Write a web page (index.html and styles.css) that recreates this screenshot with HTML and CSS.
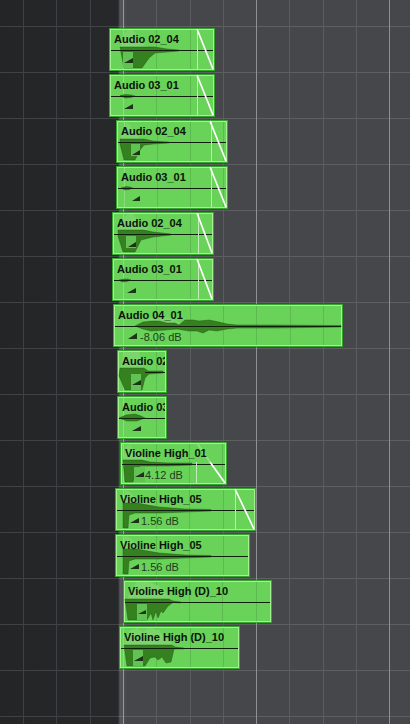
FILE: index.html
```html
<!DOCTYPE html>
<html lang="en">
<head>
<meta charset="utf-8">
<title>Arrangement</title>
<link rel="stylesheet" href="styles.css">
</head>
<body>
<main class="arrange">

<div class="lane"><div class="clip c1">
<svg class="wave" width="106" height="43"><path class="gl" d="M47.5 2V41M81.5 2V41"/><path class="gl-b" d="M14.5 2V41"/><path class="pale" d="M11 19L14 8 18 2 24 2 29 9 33 14 38 19Z"/><path class="dark" d="M11 19H46L58 21 70 22 70 23 58 24 46 25 40 30 33 40 15 40Z"/><path class="ln" d="M2 22.500H104"/><path class="sq" d="M14 24H24V40H14Z"/><path class="tri" d="M15 35L24 30V35Z"/><path class="vf" d="M88.500 2V41"/><path class="fd" d="M88 1L104 41"/></svg>
<div class="title">Audio 02_04</div></div></div>

<div class="lane"><div class="clip c1">
<svg class="wave" width="106" height="43"><path class="gl" d="M47.5 2V41M81.5 2V41"/><path class="gl-b" d="M14.5 2V41"/><path class="dark" d="M11 21.500L16 20.500 22 21 26 22 22 23.500 16 24Z"/><path class="ln" d="M2 22.500H104"/><path class="tri" d="M15 35L24 30V35Z"/><path class="vf" d="M88.500 2V41"/><path class="fd" d="M88 1L104 41"/></svg>
<div class="title">Audio 03_01</div></div></div>

<div class="lane"><div class="clip c3">
<svg class="wave" width="112" height="43"><path class="gl" d="M41.5 2V41M74.5 2V41M107.500 2V41"/><path class="gl-b" d="M8.5 2V41"/><path class="pale" d="M4 19L8 8 11 2 14 5 18 12 25 19Z"/><path class="dark" d="M4 19H28L37 21 53 22 53 23 37 24 28 25 24 30 19 40 8 40 4 24Z"/><path class="ln" d="M2 22.500H110"/><path class="sq" d="M15 24H24V36H15Z"/><path class="tri" d="M16 35L24 30V35Z"/><path class="vf" d="M95.500 2V41"/><path class="fd" d="M94 1L110 41"/></svg>
<div class="title">Audio 02_04</div></div></div>

<div class="lane"><div class="clip c3">
<svg class="wave" width="112" height="43"><path class="gl" d="M41.5 2V41M74.5 2V41M107.500 2V41"/><path class="gl-b" d="M8.5 2V41"/><path class="dark" d="M5 22L10 20.500 14 21 17 22 13 23.500 9 24Z"/><path class="ln" d="M2 22.500H110"/><path class="tri" d="M16 35L24 30V35Z"/><path class="vf" d="M95.500 2V41"/><path class="fd" d="M94 1L110 41"/></svg>
<div class="title">Audio 03_01</div></div></div>

<div class="lane"><div class="clip c5">
<svg class="wave" width="102" height="43"><path class="gl" d="M44.5 2V41M78.5 2V41"/><path class="gl-b" d="M11.5 2V41"/><path class="pale" d="M6 18L10 7 16 2 21 2 27 9 32 14 37 18Z"/><path class="dark" d="M6 18H32L41 20 59 22 59 23 41 25 29 28 23 40 11 40 6 24Z"/><path class="ln" d="M2 22.500H100"/><path class="sq" d="M14 24H24V36H14Z"/><path class="tri" d="M16 35L24 30V35Z"/><path class="vf" d="M86.500 2V41"/><path class="fd" d="M85 1L100 41"/></svg>
<div class="title">Audio 02_04</div></div></div>

<div class="lane"><div class="clip c5">
<svg class="wave" width="102" height="43"><path class="gl" d="M44.5 2V41M78.5 2V41"/><path class="gl-b" d="M11.5 2V41"/><path class="dark" d="M7 22L12 21 16 21 19 22 15 23.500 10 24Z"/><path class="ln" d="M2 22.500H100"/><path class="tri" d="M15 35L24 30V35Z"/><path class="vf" d="M86.500 2V41"/><path class="fd" d="M85 1L100 41"/></svg>
<div class="title">Audio 03_01</div></div></div>

<div class="lane"><div class="clip c7">
<svg class="wave" width="230" height="43"><path class="gl" d="M43.5 2V41M77.500 2V41M110.500 2V41M143.500 2V41M177.500 2V41M210.500 2V41"/><path class="gl-b" d="M10.5 2V41"/><path class="pale" d="M25 20L35 15 45 13 52 13 60 15 66 18 70 20Z"/><path class="dark" d="M22 22L30 18 38 17 46 17 54 19 62 19 66 21 72 16 80 16 86 17 96 16 106 18 114 20 124 21 160 21 228 21.500 228 23 160 24 124 24 114 25 104 27 96 26 90 29 84 27 76 27 70 26 64 25 52 26 38 27 30 25Z"/><path class="ln" d="M2 22.500H228"/><path class="tri" d="M15 35L24 29V35Z"/></svg>
<div class="title">Audio 04_01</div><div class="gain gain-7">-8.06 dB</div></div></div>

<div class="lane"><div class="clip c8">
<svg class="wave" width="50" height="43"><path class="gl" d="M39.500 2V41"/><path class="gl-b" d="M6.5 2V41"/><path class="pale" d="M3 18L6 8 7 2 22 2 24 8 26 18Z"/><path class="dark" d="M3 18H27L31 21 46 21 46 23 32 24 28 28 25 40 8 40 2 26Z"/><path class="ln" d="M28 22.500H48"/><path class="sq" d="M14 24H24V40H14Z"/><path class="tri" d="M15 35L24 30V35Z"/></svg>
<div class="title">Audio 02_04</div></div></div>

<div class="lane"><div class="clip c8">
<svg class="wave" width="50" height="43"><path class="gl" d="M39.500 2V41"/><path class="gl-b" d="M6.5 2V41"/><path class="dark" d="M2 22L9 19 18 18 24 20 28 22 20 25 10 25Z"/><path class="ln" d="M2 22.500H48"/><path class="tri" d="M15 35L24 30V35Z"/></svg>
<div class="title">Audio 03_01</div></div></div>

<div class="lane"><div class="clip c10">
<svg class="wave" width="107" height="43"><path class="gl" d="M36.5 2V41M69.500 2V41M102.500 2V41"/><path class="gl-b" d="M3.5 2V41"/><path class="pale" d="M3 18L6 4 10 2 14 8 20 13 28 18Z"/><path class="dark" d="M3 18H22L30 20 48 21 72 21 72 23 48 24 30 24 20 24 16 30 13 40 5 40Z"/><path class="ln" d="M2 22.500H105"/><path class="sq" d="M14 25H25V40H14Z"/><path class="tri" d="M15 35L24 30V35Z"/><path class="vf" d="M76.500 20V41"/><path class="fd-s" d="M77 1L90 20"/><path class="fd" d="M90 20L105 41"/></svg>
<div class="title">Violine High_01</div><div class="gain gain-10">4.12 dB</div></div></div>

<div class="lane"><div class="clip c11">
<svg class="wave" width="141" height="43"><path class="gl" d="M41.5 2V41M74.5 2V41M108.500 2V41"/><path class="gl-b" d="M8.5 2V41"/><path class="pale" d="M8 15L10 2 14 3 20 9 28 14 45 18Z"/><path class="dark" d="M8 15H22L44 19 70 21 96 21.500 96 23 70 24 44 25 20 25 14 27 13 40 8 40Z"/><path class="ln" d="M2 22.500H139"/><path class="tri" d="M15 35L24 30V35Z"/><path class="vf" d="M120.500 2V41"/><path class="fd" d="M120 1L139 41"/></svg>
<div class="title">Violine High_05</div><div class="gain gain-11">1.56 dB</div></div></div>

<div class="lane"><div class="clip c12">
<svg class="wave" width="135" height="43"><path class="gl" d="M41.5 2V41M74.5 2V41M108.500 2V41"/><path class="gl-b" d="M8.5 2V41"/><path class="pale" d="M8 15L10 2 14 3 20 9 28 14 45 18Z"/><path class="dark" d="M8 15H22L44 19 70 21 96 21.500 96 23 70 24 44 25 20 25 14 27 13 40 8 40Z"/><path class="ln" d="M2 22.500H133"/><path class="tri" d="M15 35L24 30V35Z"/></svg>
<div class="title">Violine High_05</div><div class="gain gain-11">1.56 dB</div></div></div>

<div class="lane"><div class="clip c13">
<svg class="wave" width="149" height="43"><path class="gl" d="M33.5 2V41M66.500 2V41M99.500 2V41M133.500 2V41"/><path class="pale" d="M4 19L10 7 14 2 26 2 36 6 42 12 50 21Z"/><path class="dark" d="M2 19H46L50 21 58 22 58 23 50 22.500 45 26 40 33 38 31 35 38 33 31 30 40 28 33 24 40 5 40Z"/><path class="ln" d="M2 22.500H147"/><path class="sq" d="M14 24H24V40H14Z"/><path class="tri" d="M15 34L23 30V34Z"/></svg>
<div class="title">Violine High (D)_10</div></div></div>

<div class="lane"><div class="clip c14">
<svg class="wave" width="121" height="43"><path class="gl" d="M37.5 2V41M71.500 2V41M104.500 2V41"/><path class="gl-b" d="M4.5 2V41"/><path class="pale" d="M5 19L10 5 18 2 24 6 30 2 40 4 44 10 50 14 55 20Z"/><path class="dark" d="M5 19H53L56 21 65 22 65 23 55 23 52 36 47 37 43 31 39 34 36 31 31 32 26 40 8 40Z"/><path class="ln" d="M2 22.500H119"/><path class="sq" d="M14 24H24V40H14Z"/><path class="tri" d="M15 35L24 30V35Z"/></svg>
<div class="title">Violine High (D)_10</div></div></div>

</main>
</body>
</html>
```
FILE: styles.css
```css
* { box-sizing: border-box; }

html, body {
  margin: 0;
  height: 100%;
  overflow: hidden;
}

.arrange {
  height: 724px;
  padding-top: 28px;
  display: flex;
  flex-direction: column;
  font-family: "Liberation Sans", Arial, sans-serif;
  background-color: #46474a;
  background-image:
    linear-gradient(#98999b, #98999b),
    linear-gradient(#8f9092, #8f9092),
    linear-gradient(#8f9092, #8f9092),
    linear-gradient(#5b5c5e, #5b5c5e),
    linear-gradient(#5b5c5e, #5b5c5e),
    linear-gradient(#5b5c5e, #5b5c5e),
    linear-gradient(#5b5c5e, #5b5c5e),
    linear-gradient(#5b5c5e, #5b5c5e),
    linear-gradient(#5b5c5e, #5b5c5e),
    linear-gradient(#3f4043, #3f4043),
    linear-gradient(#3f4043, #3f4043),
    linear-gradient(#3f4043, #3f4043),
    repeating-linear-gradient(to bottom, transparent 0 26px, rgba(255, 255, 255, 0.13) 26px 27px, transparent 27px 46px),
    linear-gradient(to right, #242527 0, #27282a 118px, #56575a 120px, #505154 123px, #46474a 127px);
  background-size:
    1px 100%, 1px 100%, 1px 100%, 1px 100%, 1px 100%, 1px 100%, 1px 100%,
    1px 100%, 1px 100%, 1px 100%, 1px 100%, 1px 100%, 100% 100%, 100% 100%;
  background-position:
    123px 0, 256px 0, 389px 0, 156px 0, 190px 0, 223px 0, 289px 0,
    323px 0, 356px 0, 23px 0, 56px 0, 90px 0, 0 0, 0 0;
  background-repeat: no-repeat;
}

.lane {
  flex: 0 0 46px;
  height: 46px;
}

.clip {
  position: relative;
  height: 43px;
  overflow: hidden;
  background: #69d259;
  box-shadow: inset 0 0 0 1px #36a62e, inset 0 0 0 2px #a2f28f;
}

.c1  { margin-left: 109px; width: 106px; }
.c3  { margin-left: 116px; width: 112px; }
.c5  { margin-left: 112px; width: 102px; }
.c7  { margin-left: 113px; width: 230px; }
.c8  { margin-left: 117px; width: 50px; }
.c10 { margin-left: 120px; width: 107px; }
.c11 { margin-left: 115px; width: 141px; }
.c12 { margin-left: 115px; width: 135px; }
.c13 { margin-left: 123px; width: 149px; }
.c14 { margin-left: 119px; width: 121px; }

.wave {
  position: absolute;
  top: 0;
  left: 0;
  display: block;
}

.gl { stroke: #5bbb4e; stroke-width: 1; fill: none; }
.gl-b { stroke: #8cdc80; stroke-width: 1; fill: none; }
.pale { fill: #7cd46d; }
.dark { fill: #35801f; stroke: #1e4f14; stroke-width: 0.4; }
.ln { stroke: #0f1f0c; stroke-width: 1; fill: none; }
.sq { fill: #62c253; }
.tri { fill: #1c3319; }
.vf { stroke: #c2ecb8; stroke-width: 1; fill: none; }
.fd { stroke: #ffffff; stroke-width: 1.7; fill: none; }
.fd-s { stroke: #8fe080; stroke-width: 1.7; fill: none; }

.title {
  position: relative;
  margin: 0 2px;
  padding: 5px 0 0 3px;
  height: 18px;
  font-size: 11px;
  line-height: 13px;
  font-weight: 700;
  color: #0b130a;
  white-space: nowrap;
  overflow: hidden;
}

.gain {
  position: relative;
  margin-top: 9px;
  font-size: 11px;
  line-height: 13px;
  color: #1f3d1a;
  white-space: nowrap;
}

.gain-7 { margin-left: 27px; }
.gain-10 { margin-left: 25px; }
.gain-11 { margin-left: 26px; }
```
